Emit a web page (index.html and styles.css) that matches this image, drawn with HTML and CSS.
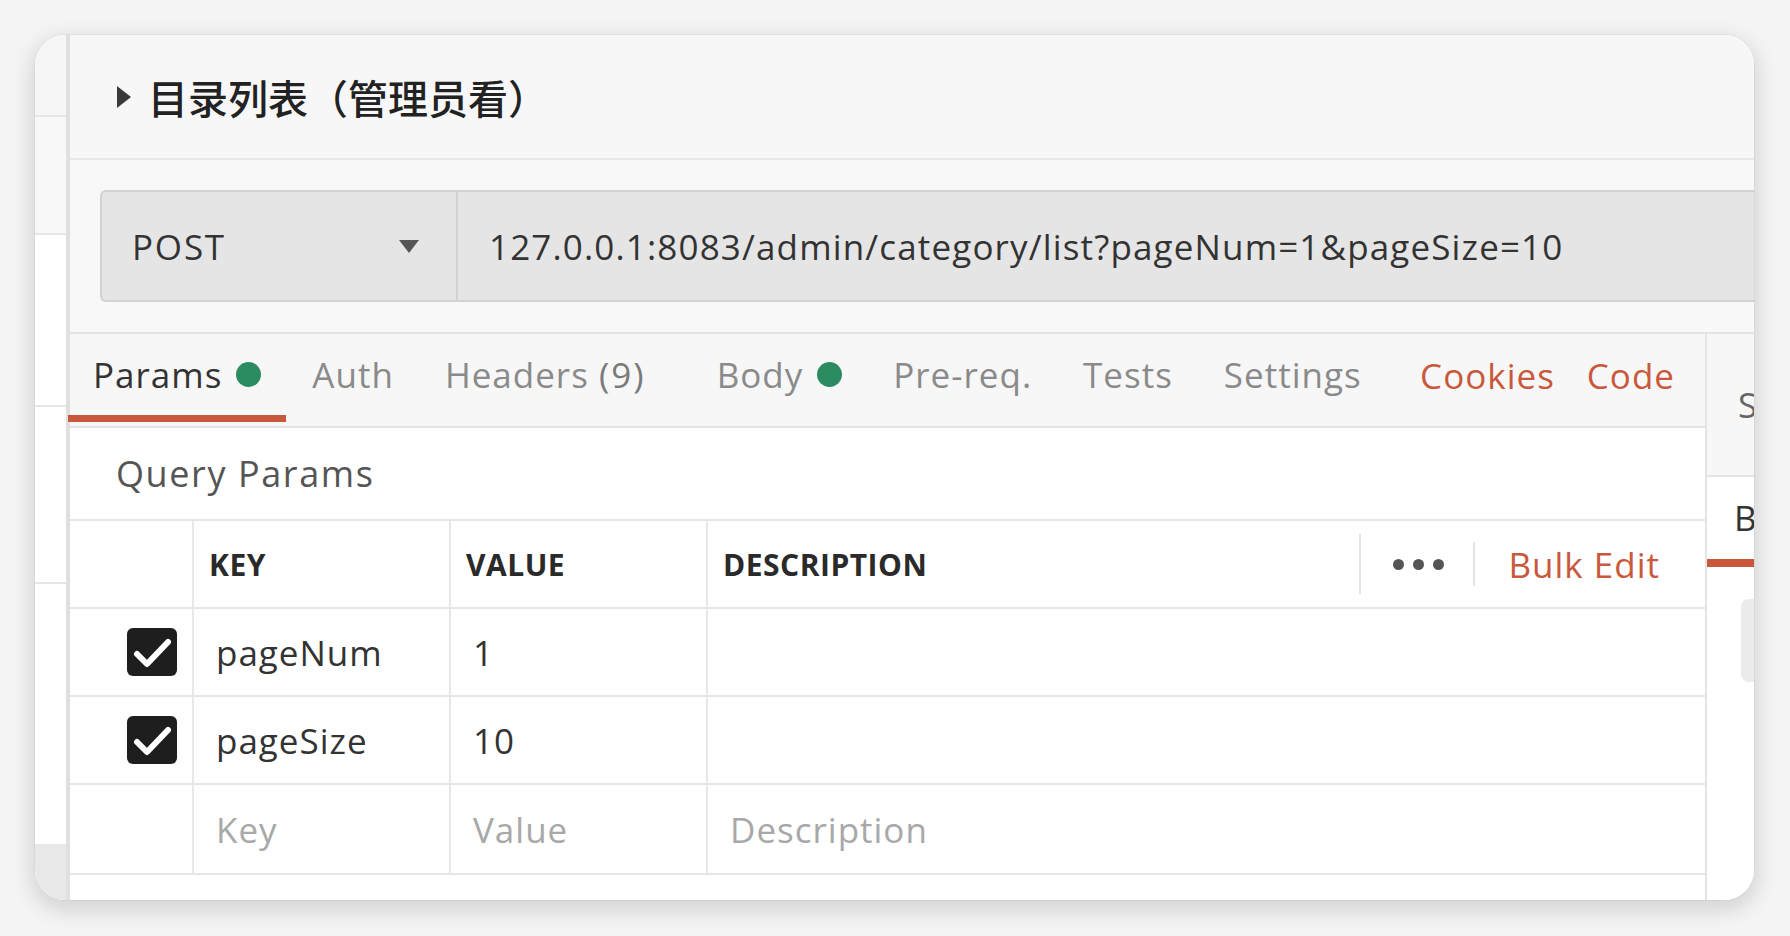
FILE: index.html
```html
<!DOCTYPE html>
<html lang="zh-CN">
<head>
<meta charset="utf-8">
<title>目录列表（管理员看）</title>
<link rel="stylesheet" href="styles.css">
</head>
<body>
<div class="frame">
  <aside class="sidebar">
    <div class="sb-row sb-a"></div>
    <div class="sb-row sb-b"></div>
    <div class="sb-row sb-c"></div>
    <div class="sb-row sb-d"></div>
    <div class="sb-row sb-e"></div>
    <div class="sb-row sb-f"></div>
  </aside>
  <main class="main">
    <header class="title-bar">
      <span class="caret"></span>
      <h1 class="title">目录列表（管理员看）</h1>
    </header>
    <section class="url-section">
      <div class="url-bar">
        <div class="method"><span class="method-name">POST</span><span class="arrow"></span></div>
        <div class="url">127.0.0.1:8083/admin/category/list?pageNum=1&amp;pageSize=10</div>
      </div>
    </section>
    <div class="content">
      <div class="request">
        <nav class="tabs">
          <div class="tab tab-first active"><span>Params</span><span class="dot"></span></div>
          <div class="tab"><span>Auth</span></div>
          <div class="tab tab-headers"><span>Headers <span class="count">(9)</span></span></div>
          <div class="tab"><span>Body</span><span class="dot"></span></div>
          <div class="tab"><span>Pre-req.</span></div>
          <div class="tab"><span>Tests</span></div>
          <div class="tab"><span>Settings</span></div>
          <div class="tab-links">
            <span class="link">Cookies</span>
            <span class="link">Code</span>
          </div>
        </nav>
        <div class="qp-title">Query Params</div>
        <div class="table">
          <div class="cell head c1"></div>
          <div class="cell head c2">KEY</div>
          <div class="cell head c3">VALUE</div>
          <div class="cell head c4">
            <span>DESCRIPTION</span>
            <div class="desc-tools">
              <span class="vsep vsep-tall"></span>
              <span class="dots"><i></i><i></i><i></i></span>
              <span class="vsep vsep-short"></span>
              <span class="link bulk">Bulk Edit</span>
            </div>
          </div>

          <div class="cell c1 check-cell">
            <span class="checkbox"><svg viewBox="0 0 50 48" width="50" height="48"><polyline points="10,26 20,36 41,14" fill="none" stroke="#fff" stroke-width="6" stroke-linecap="round" stroke-linejoin="round"/></svg></span>
          </div>
          <div class="cell c2 val">pageNum</div>
          <div class="cell c3 val">1</div>
          <div class="cell c4 val"></div>

          <div class="cell c1 check-cell">
            <span class="checkbox"><svg viewBox="0 0 50 48" width="50" height="48"><polyline points="10,26 20,36 41,14" fill="none" stroke="#fff" stroke-width="6" stroke-linecap="round" stroke-linejoin="round"/></svg></span>
          </div>
          <div class="cell c2 val">pageSize</div>
          <div class="cell c3 val">10</div>
          <div class="cell c4 val"></div>

          <div class="cell c1"></div>
          <div class="cell c2 val placeholder">Key</div>
          <div class="cell c3 val placeholder">Value</div>
          <div class="cell c4 val placeholder">Description</div>
        </div>
      </div>
      <aside class="side-panel">
        <div class="sp-top"><span class="sp-letter">S</span></div>
        <div class="sp-mid"><span class="sp-letter">B</span></div>
        <div class="sp-line"></div>
        <div class="sp-rest"><div class="sp-knob"></div></div>
      </aside>
    </div>
  </main>
</div>
</body>
</html>
```
FILE: styles.css
```css
* { box-sizing: border-box; }

html, body {
  margin: 0;
  padding: 0;
}

body {
  width: 1790px;
  height: 936px;
  overflow: hidden;
  background: #f4f4f4;
  font-family: "Open Sans", "Noto Sans", "Noto Sans CJK SC", sans-serif;
  color: #333;
}

.frame {
  margin: 35px 0 0 35px;
  width: 1719px;
  height: 865px;
  border-radius: 30px;
  overflow: hidden;
  display: flex;
  background: #fff;
  box-shadow: 0 0 0 1px rgba(0, 0, 0, 0.03), 0 7px 20px 4px rgba(0, 0, 0, 0.13);
}

/* left strip */
.sidebar {
  width: 35px;
  flex: none;
  border-right: 4px solid #e0e0e0;
  display: flex;
  flex-direction: column;
  background: #fff;
}
.sb-row { border-bottom: 2px solid #e6e6e6; flex: none; }
.sb-a { height: 82px; background: #f6f6f6; }
.sb-b { height: 118px; background: #f8f8f8; }
.sb-c { height: 172px; }
.sb-d { height: 177px; }
.sb-e { flex: 1; border-bottom: none; }
.sb-f { height: 56px; background: #e8e8e8; border-bottom: none; }

.main {
  flex: 1;
  min-width: 0;
  display: flex;
  flex-direction: column;
  background: #fff;
}

/* title */
.title-bar {
  flex: none;
  height: 125px;
  background: #f7f7f7;
  border-bottom: 2px solid #e8e8e8;
  display: flex;
  align-items: center;
  padding-left: 47px;
}
.caret {
  width: 0;
  height: 0;
  border-left: 14px solid #3a3a3a;
  border-top: 11px solid transparent;
  border-bottom: 11px solid transparent;
  margin-right: 17px;
}
.title {
  margin: 0;
  font-family: "Noto Sans CJK SC", "Noto Sans", sans-serif;
  font-size: 40px;
  font-weight: 500;
  line-height: 1;
  color: #222;
}

/* url */
.url-section {
  flex: none;
  background: #f8f8f8;
  padding: 30px 0 30px 30px;
  border-bottom: 2px solid #e4e4e4;
}
.url-bar {
  display: flex;
  height: 112px;
  background: #e5e5e5;
  border: 2px solid #d2d2d2;
  border-right: none;
  border-radius: 6px 0 0 6px;
  font-size: 35px;
  letter-spacing: 1px;
  color: #333;
}
.method {
  flex: none;
  width: 356px;
  display: flex;
  align-items: center;
  justify-content: space-between;
  padding: 0 37px 0 30px;
  border-right: 2px solid #d2d2d2;
}
.method-name { letter-spacing: 1.8px; }
.arrow {
  width: 0;
  height: 0;
  border-top: 13px solid #555;
  border-left: 10px solid transparent;
  border-right: 10px solid transparent;
}
.url {
  display: flex;
  align-items: center;
  padding-left: 31px;
  white-space: nowrap;
  letter-spacing: 1.15px;
}

/* content */
.content {
  flex: 1;
  min-height: 0;
  display: flex;
}
.request {
  flex: 1;
  min-width: 0;
  display: flex;
  flex-direction: column;
}

.tabs {
  flex: none;
  height: 94px;
  background: #f7f7f7;
  border-bottom: 2px solid #e4e4e4;
  display: flex;
  align-items: stretch;
  padding-right: 30px;
  font-size: 35px;
  letter-spacing: 1px;
}
.tab {
  position: relative;
  display: flex;
  align-items: center;
  padding: 0 25px 12px 26px;
  color: #8a8a8a;
  white-space: nowrap;
}
.tab-first { padding-left: 23px; }
.tab.active { color: #333; }
.tab.active::after {
  content: "";
  position: absolute;
  left: -2px;
  right: 0;
  bottom: 4px;
  height: 7px;
  background: #c9573b;
}
.tab-headers { padding-right: 45px; }
.count { color: #7a7a7a; letter-spacing: 2px; }
.dot {
  width: 25px;
  height: 25px;
  border-radius: 50%;
  background: #2b8b61;
  margin-left: 14px;
}
.tab-links {
  margin-left: auto;
  display: flex;
  align-items: center;
  gap: 32px;
  padding-bottom: 10px;
}
.link { color: #c9583c; }

.qp-title {
  flex: none;
  height: 91px;
  display: flex;
  align-items: center;
  padding-left: 46px;
  font-size: 36px;
  letter-spacing: 1.6px;
  color: #555;
}

.table {
  display: grid;
  grid-template-columns: 122px 257px 257px 1fr;
  grid-template-rows: 88px 88px 88px 90px;
  border-top: 2px solid #e6e6e6;
}
.cell {
  display: flex;
  align-items: center;
  border-bottom: 2px solid #e6e6e6;
  white-space: nowrap;
}
.c2, .c3, .c4 { border-left: 2px solid #e8e8e8; }
.head {
  font-size: 30px;
  font-weight: 700;
  letter-spacing: 0.5px;
  color: #2a2a2a;
  padding-left: 15px;
}
.head.c4 { padding-right: 45px; }
.desc-tools {
  margin-left: auto;
  display: flex;
  align-items: center;
}
.vsep { width: 2px; background: #e4e4e4; }
.vsep-tall { height: 60px; }
.vsep-short { height: 44px; }
.dots {
  display: flex;
  gap: 9px;
  margin: 0 29px 0 32px;
}
.dots i {
  display: block;
  width: 11px;
  height: 11px;
  border-radius: 50%;
  background: #555;
}
.bulk {
  margin-left: 33px;
  font-size: 35px;
  font-weight: 400;
  letter-spacing: 1px;
}

.val {
  padding-left: 22px;
  font-size: 35px;
  letter-spacing: 1px;
  color: #333;
}
.placeholder { color: #a8a8a8; }

.check-cell {
  justify-content: flex-end;
  padding-right: 15px;
}
.checkbox {
  display: block;
  width: 50px;
  height: 48px;
  border-radius: 6px;
  background: #1e1e1e;
}
.checkbox svg { display: block; }

/* right panel */
.side-panel {
  flex: none;
  width: 49px;
  border-left: 2px solid #e4e4e4;
  display: flex;
  flex-direction: column;
  font-size: 35px;
  overflow: hidden;
}
.sp-top {
  height: 143px;
  background: #f7f7f7;
  border-bottom: 2px solid #e4e4e4;
  display: flex;
  align-items: center;
  padding-left: 31px;
  color: #666;
}
.sp-mid {
  height: 82px;
  display: flex;
  align-items: center;
  padding-left: 27px;
  color: #333;
}
.sp-letter { display: block; line-height: 1.2; }
.sp-line {
  height: 8px;
  background: #c9573b;
}
.sp-rest {
  padding-top: 32px;
}
.sp-knob {
  margin-left: 34px;
  height: 83px;
  background: #ebebeb;
  border-radius: 8px 0 0 8px;
}
```
